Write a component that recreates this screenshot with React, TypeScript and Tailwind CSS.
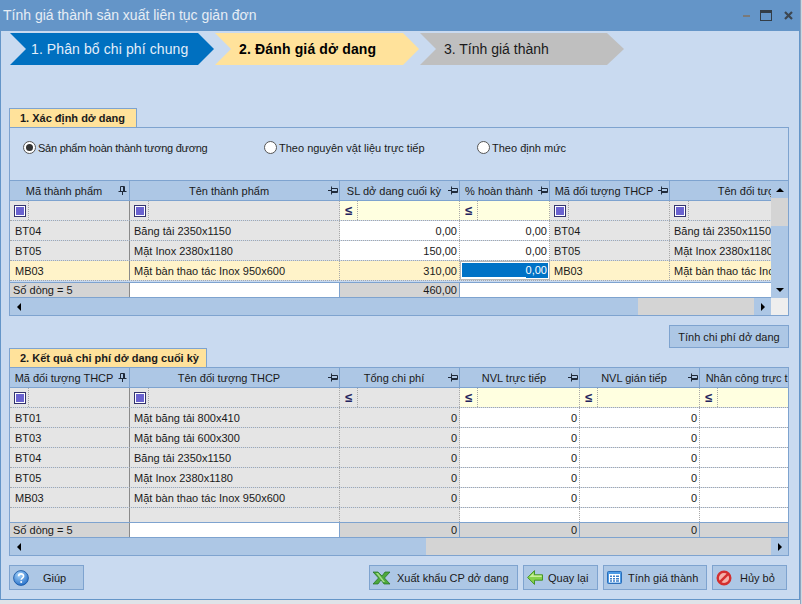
const pinDown = (
  <svg width="9" height="9" viewBox="0 0 9 9" className="shrink-0">
    <path d="M2.5 .5h4v5h-4zM.5 5.5h8M4.5 5.5V9M5.5 1v4" fill="none" stroke="#1f2a3a" />
  </svg>
);

const pinSide = (
  <svg width="10" height="9" viewBox="0 0 10 9" className="shrink-0">
    <path d="M3.5 2.5h6v4h-6zM3.5 .5v8M0 4.5h3.5M4 5.5h5" fill="none" stroke="#1f2a3a" />
  </svg>
);

function FilterBox() {
  return (
    <div className="h-full w-[19px] border-r border-dotted border-[#a8a8a8] flex items-center">
      <div className="ml-1 w-[12px] h-[12px] border border-[#33336e] bg-white flex items-center justify-center">
        <div className="w-[8px] h-[8px] bg-[#6a62cf]" />
      </div>
    </div>
  );
}

function FilterLe() {
  return (
    <div className="h-full w-[18px] border-r border-dotted border-[#a8a8a8] flex items-center pl-[5px]">
      <span className="text-[13px] leading-none font-bold text-[#23235e]">≤</span>
    </div>
  );
}

type Col = { w: string; title: string; pin?: 'down' | 'side'; right?: boolean; filter: 'box' | 'le'; yellow?: boolean; white?: boolean };

const topCols: Col[] = [
  { w: 'w-[120px]', title: 'Mã thành phẩm', pin: 'down', filter: 'box' },
  { w: 'w-[210px]', title: 'Tên thành phẩm', pin: 'side', filter: 'box' },
  { w: 'w-[120px]', title: 'SL dở dang cuối kỳ', pin: 'side', filter: 'le', yellow: true, right: true, white: true },
  { w: 'w-[90px]', title: '% hoàn thành', pin: 'side', filter: 'le', yellow: true, right: true, white: true },
  { w: 'w-[120px]', title: 'Mã đối tượng THCP', pin: 'side', filter: 'box' },
  { w: 'w-[210px]', title: 'Tên đối tượng THCP', pin: 'side', filter: 'box' },
];

const bottomCols: Col[] = [
  { w: 'w-[120px]', title: 'Mã đối tượng THCP', pin: 'down', filter: 'box' },
  { w: 'w-[210px]', title: 'Tên đối tượng THCP', pin: 'side', filter: 'box' },
  { w: 'w-[120px]', title: 'Tổng chi phí', pin: 'side', filter: 'le', right: true },
  { w: 'w-[120px]', title: 'NVL trực tiếp', pin: 'side', filter: 'le', yellow: true, right: true, white: true },
  { w: 'w-[120px]', title: 'NVL gián tiếp', pin: 'side', filter: 'le', yellow: true, right: true, white: true },
  { w: 'w-[120px]', title: 'Nhân công trực tiếp', pin: 'side', filter: 'le', yellow: true, right: true, white: true },
];

const topRows = [
  ['BT04', 'Băng tải 2350x1150', '0,00', '0,00', 'BT04', 'Băng tải 2350x1150'],
  ['BT05', 'Mặt Inox 2380x1180', '150,00', '0,00', 'BT05', 'Mặt Inox 2380x1180'],
  ['MB03', 'Mặt bàn thao tác Inox 950x600', '310,00', '0,00', 'MB03', 'Mặt bàn thao tác Inox 950x600'],
];

const bottomRows = [
  ['BT01', 'Mặt băng tải 800x410', '0', '0', '0', ''],
  ['BT03', 'Mặt băng tải 600x300', '0', '0', '0', ''],
  ['BT04', 'Băng tải 2350x1150', '0', '0', '0', ''],
  ['BT05', 'Mặt Inox 2380x1180', '0', '0', '0', ''],
  ['MB03', 'Mặt bàn thao tác Inox 950x600', '0', '0', '0', ''],
];

function HeaderRow({ cols }: { cols: Col[] }) {
  return (
    <div className="flex h-[20px] bg-[#adc7e5] border-b border-[#7ea3cf]">
      {cols.map((c, i) => (
        <div key={i} className={`${c.w} shrink-0 h-full flex items-center border-r border-[#7ea3cf] overflow-hidden ${c.pin === 'down' ? 'pr-[2px]' : 'pr-px'}`}>
          <span className="flex-1 text-center whitespace-nowrap pt-px">{c.title}</span>
          {c.pin === 'down' && pinDown}
          {c.pin === 'side' && pinSide}
        </div>
      ))}
    </div>
  );
}

function FilterRow({ cols }: { cols: Col[] }) {
  return (
    <div className="flex h-[20px] border-b border-dotted border-[#a8a8a8]">
      {cols.map((c, i) => (
        <div
          key={i}
          className={`${c.w} shrink-0 h-full ${c.yellow ? 'bg-[#ffffe0]' : 'bg-[#e5e5e5]'} ${i === 0 ? 'border-r border-[#8a8a8a]' : 'border-r border-dotted border-[#a8a8a8]'}`}
        >
          {c.filter === 'box' ? <FilterBox /> : <FilterLe />}
        </div>
      ))}
    </div>
  );
}

function DataRow({ cols, cells, active, editCol }: { cols: Col[]; cells: string[]; active?: boolean; editCol?: number }) {
  return (
    <div className="flex h-[20px] border-b border-dotted border-[#a8a8a8]">
      {cols.map((c, i) => {
        const bg = active ? 'bg-[#fff3c9]' : c.white ? 'bg-white' : 'bg-[#e5e5e5]';
        const border = i === 0 ? 'border-r border-[#8a8a8a]' : 'border-r border-dotted border-[#a8a8a8]';
        if (i === editCol) {
          return (
            <div key={i} className={`${c.w} shrink-0 h-full bg-white border border-[#b8b8b8] p-px flex`}>
              <div className="flex-1 h-[15px] bg-[#0072c6] border-b border-white" />
              <span className="h-[15px] bg-[#0072c6] text-white leading-[15px] pr-px">{cells[i]}</span>
            </div>
          );
        }
        return (
          <div
            key={i}
            className={`${c.w} shrink-0 h-full pt-px ${bg} ${border} flex items-center whitespace-nowrap overflow-hidden ${c.right ? 'justify-end pr-[2px]' : i === 0 ? 'pl-[5px]' : 'pl-[4px]'}`}
          >
            {cells[i]}
          </div>
        );
      })}
    </div>
  );
}

function SumRow({ cols, cells }: { cols: Col[]; cells: string[] }) {
  return (
    <div className="flex h-[16px] border-t border-b border-[#7ea3cf]">
      {cols.map((c, i) => {
        const white = cells[i] === '';
        const open = white && cells[i + 1] === '';
        return (
          <div
            key={i}
            className={`${c.w} shrink-0 h-full flex items-center whitespace-nowrap ${open ? '' : 'border-r'} ${white ? 'bg-white' : 'bg-[#d4d4d4]'} ${i === 0 ? 'pl-[3px] border-[#8a8a8a]' : 'justify-end pr-[2px] border-[#7ea3cf]'}`}
          >
            {cells[i]}
          </div>
        );
      })}
    </div>
  );
}

const arrowLeft = <div className="w-0 h-0 border-y-[4px] border-y-transparent border-r-[4px] border-r-black" />;
const arrowRight = <div className="w-0 h-0 border-y-[4px] border-y-transparent border-l-[4px] border-l-black" />;

function Tab({ children, w }: { children: string; w: string }) {
  return (
    <div className={`${w} h-[19px] bg-[#ffe29b] border border-b-0 border-[#7ea3cf] flex items-center pl-[10px] font-bold whitespace-nowrap`}>
      {children}
    </div>
  );
}

function Button({ w, icon, label, gap }: { w: string; icon?: React.ReactNode; label: string; gap: string }) {
  return (
    <div className={`${w} h-[25px] shrink-0 bg-[#adc7e5] border border-[#7ea3cf] flex items-center pl-[3px] whitespace-nowrap`}>
      {icon}
      <span className={`${gap} pt-px`}>{label}</span>
    </div>
  );
}

const helpIcon = (
  <svg width="16" height="16" viewBox="0 0 16 16" className="shrink-0">
    <defs>
      <radialGradient id="hg" cx="0.4" cy="0.3" r="0.8">
        <stop offset="0" stopColor="#a6d4fa" />
        <stop offset="1" stopColor="#1a66c4" />
      </radialGradient>
    </defs>
    <circle cx="8" cy="8" r="7.4" fill="url(#hg)" stroke="#11509e" strokeWidth="0.8" />
    <path d="M5.6 6.2c0-3.1 5-3.1 5 0 0 1.9-2.4 1.9-2.4 3.6" fill="none" stroke="#fff" strokeWidth="1.6" />
    <circle cx="8.2" cy="12" r="1" fill="#fff" />
  </svg>
);

const excelIcon = (
  <svg width="18" height="14" viewBox="0 0 18 14" className="shrink-0">
    <path d="M0 1h5l4 4 3-4h5l-5.5 6L17 13h-6L8 9l-3 4H0l5.5-6z" fill="#4ea93b" stroke="#1f6e22" strokeWidth="0.7" />
    <path d="M3 2h2l7 9h-2z" fill="#a6dc8c" />
  </svg>
);

const backIcon = (
  <svg width="16" height="15" viewBox="0 0 16 15" className="shrink-0">
    <path d="M7.5 .6L.6 7.5l6.9 6.9V10.2h8V4.8h-8z" fill="#86d24a" stroke="#3c8d1e" strokeWidth="0.9" />
    <path d="M6.5 3L2.3 7h12.4V5.5h-8.2z" fill="#c7ee9c" />
  </svg>
);

const calcIcon = (
  <svg width="15" height="13" viewBox="0 0 15 13" className="shrink-0">
    <rect x=".5" y=".5" width="14" height="12" rx="1" fill="#4d9be6" stroke="#2a6db8" />
    <rect x="2" y="3" width="11" height="8.5" fill="#fff" />
    <path d="M3 4.5h2v1.5H3zM6 4.5h2v1.5H6zM9 4.5h3v1.5H9zM3 7h2v1.5H3zM6 7h2v1.5H6zM9 7h3v1.5H9zM3 9.3h2v1.5H3zM6 9.3h2v1.5H6zM9 9.3h3v1.5H9z" fill="#3d7fca" />
  </svg>
);

const cancelIcon = (
  <svg width="16" height="16" viewBox="0 0 16 16" className="shrink-0">
    <circle cx="8" cy="8" r="6.3" fill="#f6b0a8" stroke="#d32f2f" strokeWidth="2.4" />
    <path d="M3.6 12.4L12.4 3.6" stroke="#d32f2f" strokeWidth="2.4" />
  </svg>
);

export default function App() {
  return (
    <div className="w-[802px] h-[604px] overflow-hidden bg-[#dfe3e8] text-[11px] text-[#1a1a1a] font-['Liberation_Sans',sans-serif]">
      <div className="flex h-[604px]">
        <div className="w-[800px] shrink-0 h-[600px] bg-[#c9daf0] border-x border-b border-[#6495c8] flex flex-col">
          {/* title bar */}
          <div className="h-[31px] -mx-px bg-[#6495c8] flex items-center pl-[3px] pr-[5px] shrink-0">
            <span className="flex-1 text-[14px] text-[#e6edf5]">Tính giá thành sản xuất liên tục giản đơn</span>
            <div className="w-[7px] h-[2px] bg-[#7a7a7a] mt-[1px]" />
            <div className="ml-[10px] w-[12px] h-[11px] border border-[#333d47] border-t-[3px]" />
            <svg width="9" height="9" viewBox="0 0 9 9" className="ml-[12px] mr-[2px]">
              <path d="M1 1l7 7M8 1L1 8" stroke="#3d4650" strokeWidth="2.2" />
            </svg>
          </div>

          {/* steps */}
          <div className="flex mt-[2px] ml-[9px] shrink-0">
            <div className="w-[204px] h-[32px] bg-[#0070c0] [clip-path:polygon(0_0,188px_0,100%_50%,188px_100%,0_100%,16px_50%)] flex items-center pl-[21px] text-[14px] text-[#e3eefa] tracking-[0.1px]">
              1. Phân bổ chi phí chung
            </div>
            <div className="ml-px w-[204px] h-[32px] bg-[#ffe29b] [clip-path:polygon(0_0,188px_0,100%_50%,188px_100%,0_100%,16px_50%)] flex items-center pl-[24px] text-[14px] font-bold text-black tracking-[0.15px]">
              2. Đánh giá dở dang
            </div>
            <div className="ml-px w-[204px] h-[32px] bg-[#bfbfbf] [clip-path:polygon(0_0,187px_0,100%_50%,187px_100%,0_100%,16px_50%)] flex items-center pl-[24px] text-[14px]">
              3. Tính giá thành
            </div>
          </div>

          {/* panel 1 */}
          <div className="mt-[43px] ml-[8px] w-[780px] shrink-0">
            <Tab w="w-[128px]">1. Xác định dở dang</Tab>
            <div className="border border-[#7ea3cf] h-[189px] flex flex-col">
              <div className="h-[52px] shrink-0 flex pt-[13px] leading-[13px]">
                <div className="w-[254px] pl-[13px] flex items-start gap-[2px]">
                  <span className="w-[13px] h-[13px] rounded-full border border-[#555] bg-white flex items-center justify-center">
                    <span className="w-[7px] h-[7px] rounded-full bg-[#333]" />
                  </span>
                  <span className="tracking-[-0.25px] pt-px">Sản phẩm hoàn thành tương đương</span>
                </div>
                <div className="w-[213px] flex items-start gap-[2px]">
                  <span className="w-[13px] h-[13px] rounded-full border border-[#555] bg-white" />
                  <span className="pt-px">Theo nguyên vật liệu trực tiếp</span>
                </div>
                <div className="flex items-start gap-[2px]">
                  <span className="w-[13px] h-[13px] rounded-full border border-[#555] bg-white" />
                  <span className="pt-px">Theo định mức</span>
                </div>
              </div>
              <div className="flex flex-1 min-h-0">
                <div className="w-[761px] shrink-0 overflow-hidden">
                  <div className="w-[880px] border-t border-[#7ea3cf]">
                    <HeaderRow cols={topCols} />
                    <FilterRow cols={topCols} />
                    <DataRow cols={topCols} cells={topRows[0]} />
                    <DataRow cols={topCols} cells={topRows[1]} />
                    <DataRow cols={topCols} cells={topRows[2]} active editCol={3} />
                    <div className="mt-px">
                      <SumRow cols={topCols} cells={['Số dòng = 5', '', '460,00', '', '', '']} />
                    </div>
                  </div>
                  <div className="h-[17px] bg-[#adc7e5] flex items-center">
                    <div className="w-[18px] flex justify-center">{arrowLeft}</div>
                    <div className="ml-[610px] w-[116px] h-full bg-[#d4d4d4]" />
                    <div className="w-[17px] flex justify-center">{arrowRight}</div>
                  </div>
                </div>
                <div className="flex-1 flex flex-col border-t border-[#7ea3cf]">
                  <div className="flex-1 bg-[#adc7e5] flex flex-col">
                    <div className="h-[17px] shrink-0 flex items-center justify-center">
                      <div className="w-0 h-0 border-x-[4px] border-x-transparent border-b-[4px] border-b-black" />
                    </div>
                    <div className="h-[28px] shrink-0 bg-[#d4d4d4]" />
                    <div className="flex-1" />
                    <div className="h-[17px] shrink-0 flex items-center justify-center">
                      <div className="w-0 h-0 border-x-[4px] border-x-transparent border-t-[4px] border-t-black" />
                    </div>
                  </div>
                  <div className="h-[17px] shrink-0 bg-[#eeeeee]" />
                </div>
              </div>
            </div>
          </div>

          {/* recalculation button */}
          <div className="flex justify-end mt-[9px] w-[788px] shrink-0">
            <div className="w-[120px] h-[23px] pt-px bg-[#adc7e5] border border-[#7ea3cf] flex items-center justify-center">
              Tính chi phí dở dang
            </div>
          </div>

          {/* panel 2 */}
          <div className="ml-[8px] w-[780px] shrink-0">
            <Tab w="w-[198px]">2. Kết quả chi phí dở dang cuối kỳ</Tab>
            <div className="border border-[#7ea3cf] overflow-hidden">
              <div className="w-[840px]">
                <HeaderRow cols={bottomCols} />
                <FilterRow cols={bottomCols} />
                {bottomRows.map((r) => (
                  <DataRow key={r[0]} cols={bottomCols} cells={r} />
                ))}
                <div className="flex h-[14px]">
                  {bottomCols.map((c, i) => (
                    <div
                      key={i}
                      className={`${c.w} shrink-0 h-full ${c.white ? 'bg-white' : 'bg-[#e5e5e5]'} ${i === 0 ? 'border-r border-[#8a8a8a]' : 'border-r border-dotted border-[#a8a8a8]'}`}
                    />
                  ))}
                </div>
                <SumRow cols={bottomCols} cells={['Số dòng = 5', '', '0', '0', '0', '0']} />
              </div>
              <div className="h-[17px] bg-[#adc7e5] flex items-center">
                <div className="w-[18px] flex justify-center">{arrowLeft}</div>
                <div className="ml-[398px] flex-1 h-full bg-[#d4d4d4]" />
                <div className="w-[17px] flex justify-center">{arrowRight}</div>
              </div>
            </div>
          </div>

          {/* footer buttons */}
          <div className="mt-[9px] ml-[8px] w-[778px] flex shrink-0">
            <Button w="w-[75px]" icon={helpIcon} label="Giúp" gap="ml-[14px]" />
            <div className="flex-1" />
            <Button w="w-[149px]" icon={excelIcon} label="Xuất khẩu CP dở dang" gap="ml-[6px]" />
            <div className="w-[5px]" />
            <Button w="w-[75px]" icon={backIcon} label="Quay lại" gap="ml-[5px]" />
            <div className="w-[5px]" />
            <Button w="w-[104px]" icon={calcIcon} label="Tính giá thành" gap="ml-[6px]" />
            <div className="w-[5px]" />
            <Button w="w-[75px]" icon={cancelIcon} label="Hủy bỏ" gap="ml-[8px]" />
          </div>
        </div>
        <div className="flex-1 bg-[#cfd8e3] border-l border-[#8fa6bf]" />
      </div>
    </div>
  );
}
